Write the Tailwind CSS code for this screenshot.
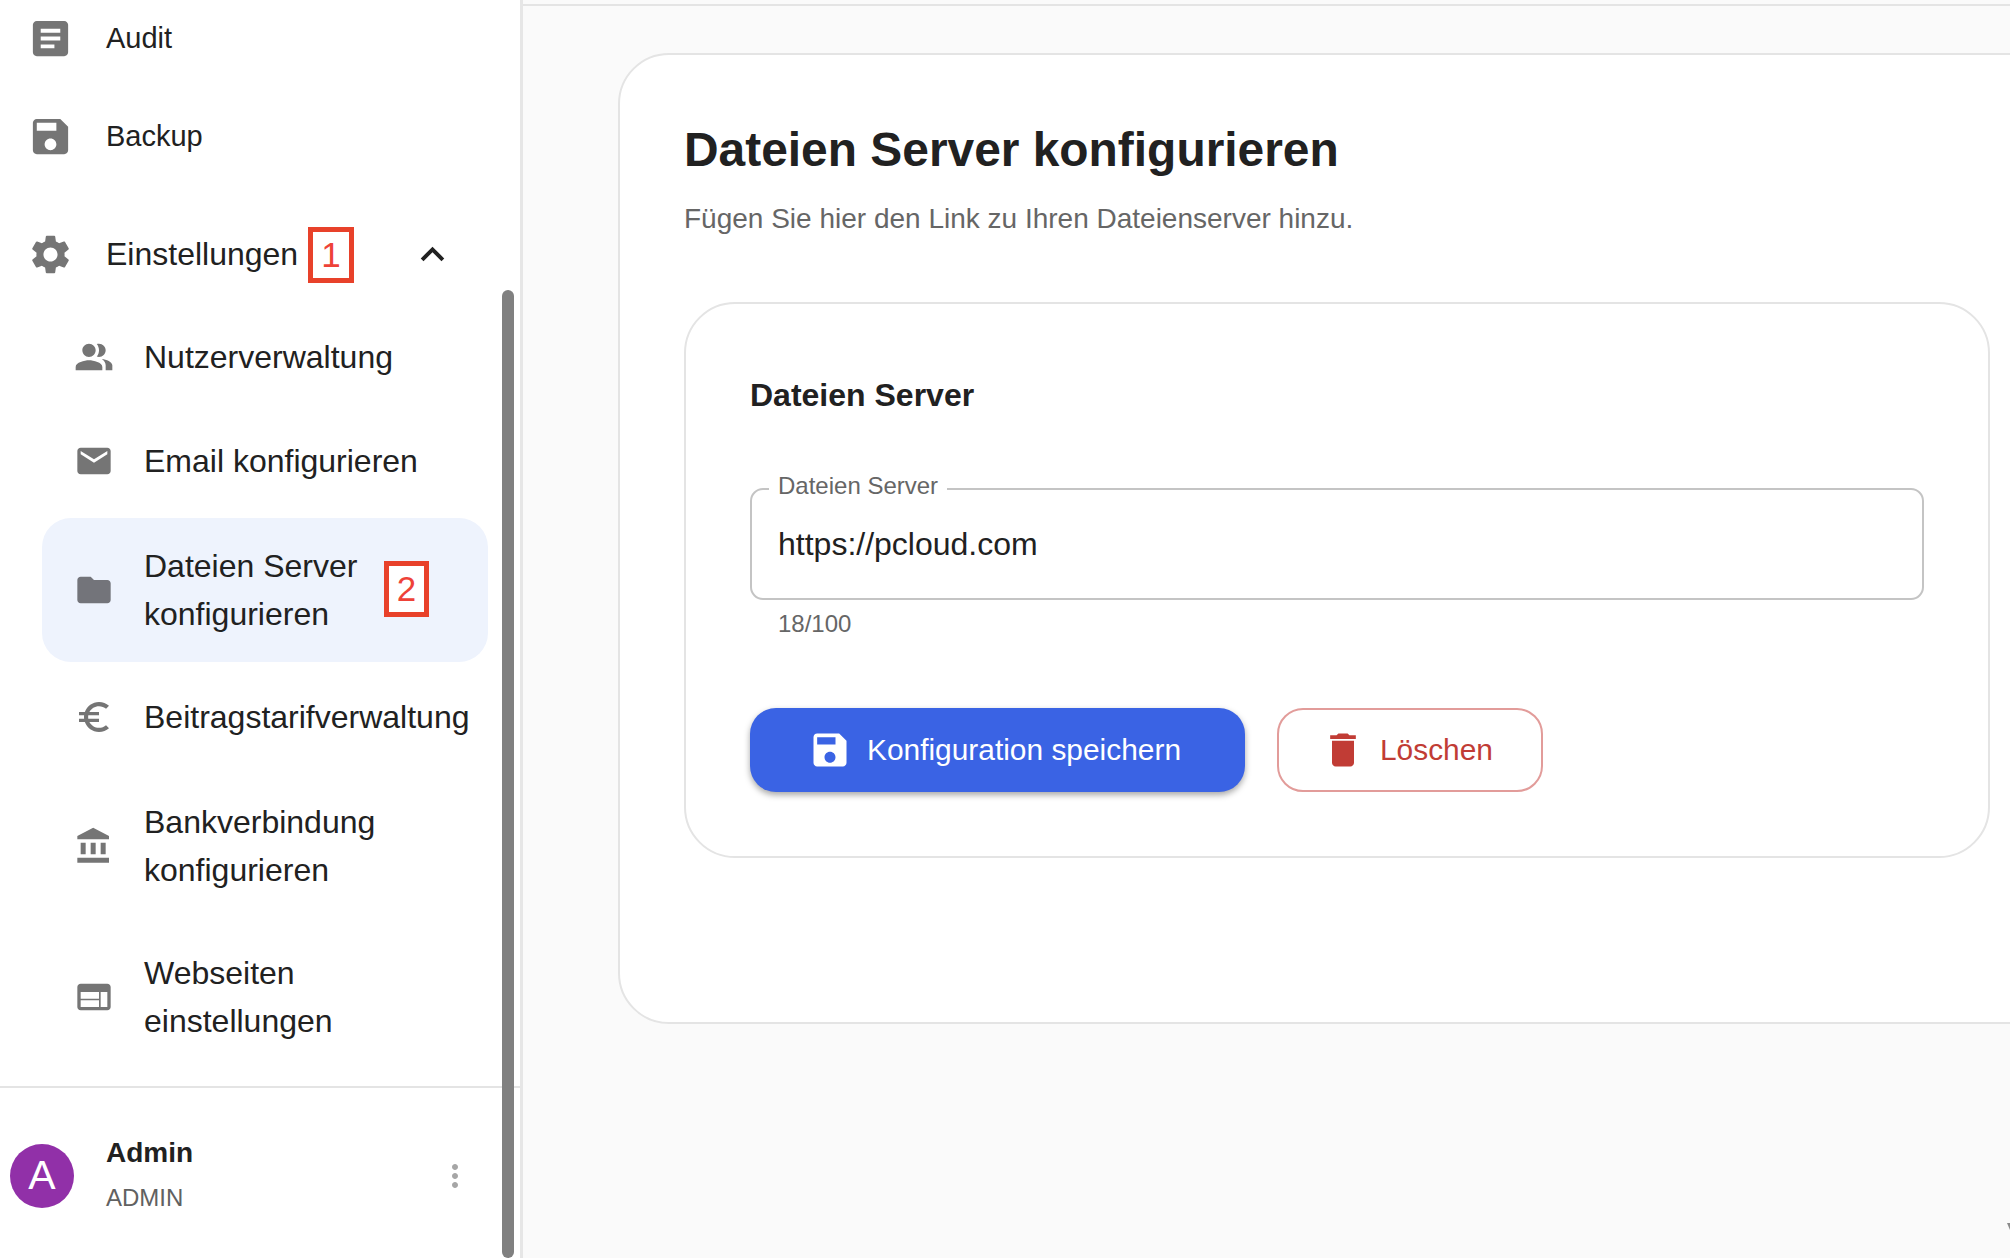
<!DOCTYPE html>
<html lang="de">
<head>
    <meta charset="UTF-8">
    <title>Dateien Server konfigurieren</title>
    <script src="https://cdn.jsdelivr.net/npm/@tailwindcss/browser@4"></script>
</head>
<body class="relative h-[1258px] w-[2010px] overflow-hidden bg-[#fafafa] font-['Liberation_Sans',Arial,sans-serif] text-[#212121]">
<div class="flex h-full">
    <!-- Sidebar -->
    <aside class="relative flex h-full w-[523px] shrink-0 flex-col border-r-[3px] border-[#e6e6e6] bg-white">
        <nav class="flex flex-col">
            <a class="flex h-[76px] items-center pl-[27px] text-[29px]">
                <svg class="h-[47px] w-[47px] fill-[#757575]" viewBox="0 0 24 24"><path d="M19 3H5c-1.1 0-2 .9-2 2v14c0 1.1.9 2 2 2h14c1.1 0 2-.9 2-2V5c0-1.1-.9-2-2-2zm-5 14H7v-2h7v2zm3-4H7v-2h10v2zm0-4H7V7h10v2z"/></svg>
                <span class="ml-[32px] mt-[2px]">Audit</span>
            </a>
            <a class="mt-[11px] flex h-[98px] items-center pl-[27px] text-[29px]">
                <svg class="h-[47px] w-[47px] fill-[#757575]" viewBox="0 0 24 24"><path d="M17 3H5c-1.11 0-2 .9-2 2v14c0 1.1.89 2 2 2h14c1.1 0 2-.9 2-2V7l-4-4zm-5 16c-1.66 0-3-1.34-3-3s1.34-3 3-3 3 1.34 3 3-1.34 3-3 3zm3-10H5V5h10v4z"/></svg>
                <span class="ml-[32px] mt-[2px]">Backup</span>
            </a>
            <a class="mt-[20px] flex h-[98px] items-center pl-[27px] text-[32px]">
                <svg class="h-[47px] w-[47px] fill-[#757575]" viewBox="0 0 24 24"><path d="M19.14 12.94c.04-.3.06-.61.06-.94 0-.32-.02-.64-.07-.94l2.03-1.58c.18-.14.23-.41.12-.61l-1.92-3.32c-.12-.22-.37-.29-.59-.22l-2.39.96c-.5-.38-1.03-.7-1.62-.94l-.36-2.54c-.04-.24-.24-.41-.48-.41h-3.84c-.24 0-.43.17-.47.41l-.36 2.54c-.59.24-1.13.57-1.62.94l-2.39-.96c-.22-.08-.47 0-.59.22L2.74 8.87c-.12.21-.08.47.12.61l2.03 1.58c-.05.3-.09.63-.09.94s.02.64.07.94l-2.03 1.58c-.18.14-.23.41-.12.61l1.92 3.32c.12.22.37.29.59.22l2.39-.96c.5.38 1.03.7 1.62.94l.36 2.54c.05.24.24.41.48.41h3.84c.24 0 .44-.17.47-.41l.36-2.54c.59-.24 1.13-.56 1.62-.94l2.39.96c.22.08.47 0 .59-.22l1.92-3.32c.12-.22.07-.47-.12-.61l-2.01-1.58zM12 15.6c-1.98 0-3.6-1.62-3.6-3.6s1.62-3.6 3.6-3.6 3.6 1.62 3.6 3.6-1.62 3.6-3.6 3.6z"/></svg>
                <span class="ml-[32px]">Einstellungen</span>
                <svg class="ml-auto mr-[64px] h-[47px] w-[47px] fill-[#212121]" viewBox="0 0 24 24"><path d="M12 8l-6 6 1.41 1.41L12 10.83l4.59 4.58L18 14z"/></svg>
            </a>

            <!-- Untermenue -->
            <div class="mt-[2px] flex flex-col text-[32px] leading-[48px]">
                <a class="flex h-[104px] items-center pl-[74px]">
                    <svg class="h-[40px] w-[40px] fill-[#757575]" viewBox="0 0 24 24"><path d="M16.67 13.13C18.04 14.06 19 15.32 19 17v3h4v-3c0-2.18-3.57-3.47-6.33-3.87zM15 12c2.21 0 4-1.79 4-4s-1.79-4-4-4c-.47 0-.91.1-1.33.24C14.5 5.27 15 6.58 15 8s-.5 2.73-1.33 3.76c.42.14.86.24 1.33.24zM9 12c2.21 0 4-1.79 4-4s-1.79-4-4-4-4 1.79-4 4 1.79 4 4 4zm0 2c-2.67 0-8 1.34-8 4v2h16v-2c0-2.66-5.33-4-8-4z"/></svg>
                    <span class="ml-[30px]">Nutzerverwaltung</span>
                </a>
                <a class="flex h-[104px] items-center pl-[74px]">
                    <svg class="h-[40px] w-[40px] fill-[#757575]" viewBox="0 0 24 24"><path d="M20 4H4c-1.1 0-1.99.9-1.99 2L2 18c0 1.1.9 2 2 2h16c1.1 0 2-.9 2-2V6c0-1.1-.9-2-2-2zm0 4l-8 5-8-5V6l8 5 8-5v2z"/></svg>
                    <span class="ml-[30px]">Email konfigurieren</span>
                </a>
                <a class="mb-[3px] ml-[42px] mr-[32px] mt-[5px] flex h-[144px] items-center rounded-[29px] bg-[#eef3fd] pl-[32px]">
                    <svg class="h-[40px] w-[40px] fill-[#73747a]" viewBox="0 0 24 24"><path d="M10 4H4c-1.1 0-1.99.9-1.99 2L2 18c0 1.1.9 2 2 2h16c1.1 0 2-.9 2-2V8c0-1.1-.9-2-2-2h-8l-2-2z"/></svg>
                    <span class="ml-[30px]">Dateien Server<br>konfigurieren</span>
                </a>
                <a class="flex h-[104px] items-center pl-[74px]">
                    <svg class="h-[40px] w-[40px] fill-[#757575]" viewBox="0 0 24 24"><path d="M15 18.5c-2.51 0-4.68-1.42-5.76-3.5H15v-2H8.58c-.05-.33-.08-.66-.08-1s.03-.67.08-1H15V9H9.24C10.32 6.92 12.5 5.5 15 5.5c1.61 0 3.09.59 4.23 1.57L21 5.3C19.41 3.87 17.3 3 15 3c-3.92 0-7.24 2.51-8.48 6H3v2h3.06c-.04.33-.06.66-.06 1s.02.67.06 1H3v2h3.52c1.24 3.49 4.56 6 8.48 6 2.31 0 4.41-.87 6-2.3l-1.78-1.77c-1.13.98-2.6 1.57-4.22 1.57z"/></svg>
                    <span class="ml-[30px]">Beitragstarifverwaltung</span>
                </a>
                <a class="mt-[4px] flex h-[146px] items-center pl-[74px]">
                    <svg class="h-[40px] w-[40px] fill-[#757575]" viewBox="0 0 24 24"><path d="M4 10v7h3v-7H4zm6 0v7h3v-7h-3zM2 22h19v-3H2v3zm14-12v7h3v-7h-3zm-4.5-9L2 6v2h19V6l-9.5-5z"/></svg>
                    <span class="ml-[30px]">Bankverbindung<br>konfigurieren</span>
                </a>
                <a class="mt-[5px] flex h-[146px] items-center pl-[74px]">
                    <svg class="h-[40px] w-[40px] fill-[#757575]" viewBox="0 0 24 24"><path d="M20 4H4c-1.1 0-1.99.9-1.99 2L2 18c0 1.1.9 2 2 2h16c1.1 0 2-.9 2-2V6c0-1.1-.9-2-2-2zm-5 14H4v-4h11v4zm0-5H4V9h11v4zm5 5h-4V9h4v9z"/></svg>
                    <span class="ml-[30px]">Webseiten<br>einstellungen</span>
                </a>
            </div>
        </nav>

        <!-- Nutzer -->
        <div class="mt-[16px] flex h-[173px] items-center border-t-[2px] border-[#e4e4e4] pl-[10px] pt-[6px]">
            <div class="flex h-[64px] w-[64px] shrink-0 items-center justify-center rounded-full bg-[#9130a8] text-[41px] text-white">A</div>
            <div class="ml-[32px] flex flex-col pb-[2px]">
                <span class="text-[28px] font-bold leading-[36px]">Admin</span>
                <span class="mt-[9px] text-[24px] leading-[36px] text-[#616161]">ADMIN</span>
            </div>
            <svg class="ml-auto mr-[47px] h-[36px] w-[36px] fill-[#a6a6a6]" viewBox="0 0 24 24"><path d="M12 8c1.1 0 2-.9 2-2s-.9-2-2-2-2 .9-2 2 .9 2 2 2zm0 2c-1.1 0-2 .9-2 2s.9 2 2 2 2-.9 2-2-.9-2-2-2zm0 6c-1.1 0-2 .9-2 2s.9 2 2 2 2-.9 2-2-.9-2-2-2z"/></svg>
        </div>

        <!-- Scrollbalken -->
        <div class="absolute left-[502px] top-[290px] h-[968px] w-[12px] rounded-[6px] bg-[#808080]"></div>

        <!-- Markierungen -->
        <div class="absolute left-[308px] top-[227px] flex h-[56px] w-[46px] items-center justify-center border-[5px] border-[#e8412a] bg-white text-[35px] text-[#ee4238]">1</div>
        <div class="absolute left-[384px] top-[561px] flex h-[56px] w-[45px] items-center justify-center border-[5px] border-[#e8412a] bg-white text-[35px] text-[#ee4238]">2</div>
    </aside>

    <!-- Inhalt -->
    <main class="min-w-0 flex-1 overflow-hidden">
        <div class="mt-[4px] h-[2px] bg-[#e4e4e4]"></div>
        <section class="ml-[95px] mt-[47px] h-[971px] w-[1500px] rounded-[51px] border-[2px] border-[#e4e4e4] bg-white pl-[64px] pt-[65px]">
            <h1 class="text-[47.9px] font-bold leading-[60px]">Dateien Server konfigurieren</h1>
            <p class="mt-[19px] text-[28px] leading-[40px] text-[#666666]">Fügen Sie hier den Link zu Ihren Dateienserver hinzu.</p>

            <div class="mt-[63px] h-[556px] w-[1306px] rounded-[51px] border-[2px] border-[#e4e4e4] px-[64px] pt-[64px]">
                <h2 class="text-[32px] font-bold leading-[55px]">Dateien Server</h2>

                <fieldset class="mt-[53px] h-[124px] w-[1174px] rounded-[13px] border-[2px] border-[#c4c4c4] pl-[17px]">
                    <legend class="-translate-y-[3px] px-[9px] text-[24px] leading-[26px] text-[#666666]">Dateien Server</legend>
                    <div class="pl-[9px] pt-[22px] text-[32px] leading-[40px]">https://pcloud.com</div>
                </fieldset>
                <p class="ml-[28px] mt-[9px] text-[24px] leading-[30px] text-[#666666]">18/100</p>

                <div class="mt-[69px] flex gap-[32px]">
                    <button class="flex h-[84px] w-[495px] items-center justify-center gap-[15px] rounded-[26px] bg-[#3a63e4] pr-[6px] text-[29.9px] text-white shadow-[0_3px_6px_rgba(0,0,0,0.35)]">
                        <svg class="h-[44px] w-[44px] fill-white" viewBox="0 0 24 24"><path d="M17 3H5c-1.11 0-2 .9-2 2v14c0 1.1.89 2 2 2h14c1.1 0 2-.9 2-2V7l-4-4zm-5 16c-1.66 0-3-1.34-3-3s1.34-3 3-3 3 1.34 3 3-1.34 3-3 3zm3-10H5V5h10v4z"/></svg>
                        Konfiguration speichern
                    </button>
                    <button class="flex h-[84px] w-[266px] items-center justify-center gap-[15px] rounded-[26px] border-[2px] border-[#e29c9a] bg-white pr-[6px] text-[29.9px] text-[#c13c35]">
                        <svg class="h-[44px] w-[44px] fill-[#c13c35]" viewBox="0 0 24 24"><path d="M6 19c0 1.1.9 2 2 2h8c1.1 0 2-.9 2-2V7H6v12zM19 4h-3.5l-1-1h-5l-1 1H5v2h14V4z"/></svg>
                        Löschen
                    </button>
                </div>
            </div>
        </section>
    </main>
</div>
<!-- kleiner Pfeil am Rand -->
<svg class="absolute left-[2007px] top-[1223px] h-[7px] w-[3px] fill-[#8a8a8a]" viewBox="0 0 3 7"><path d="M0 0h3v7z"/></svg>
</body>
</html>
